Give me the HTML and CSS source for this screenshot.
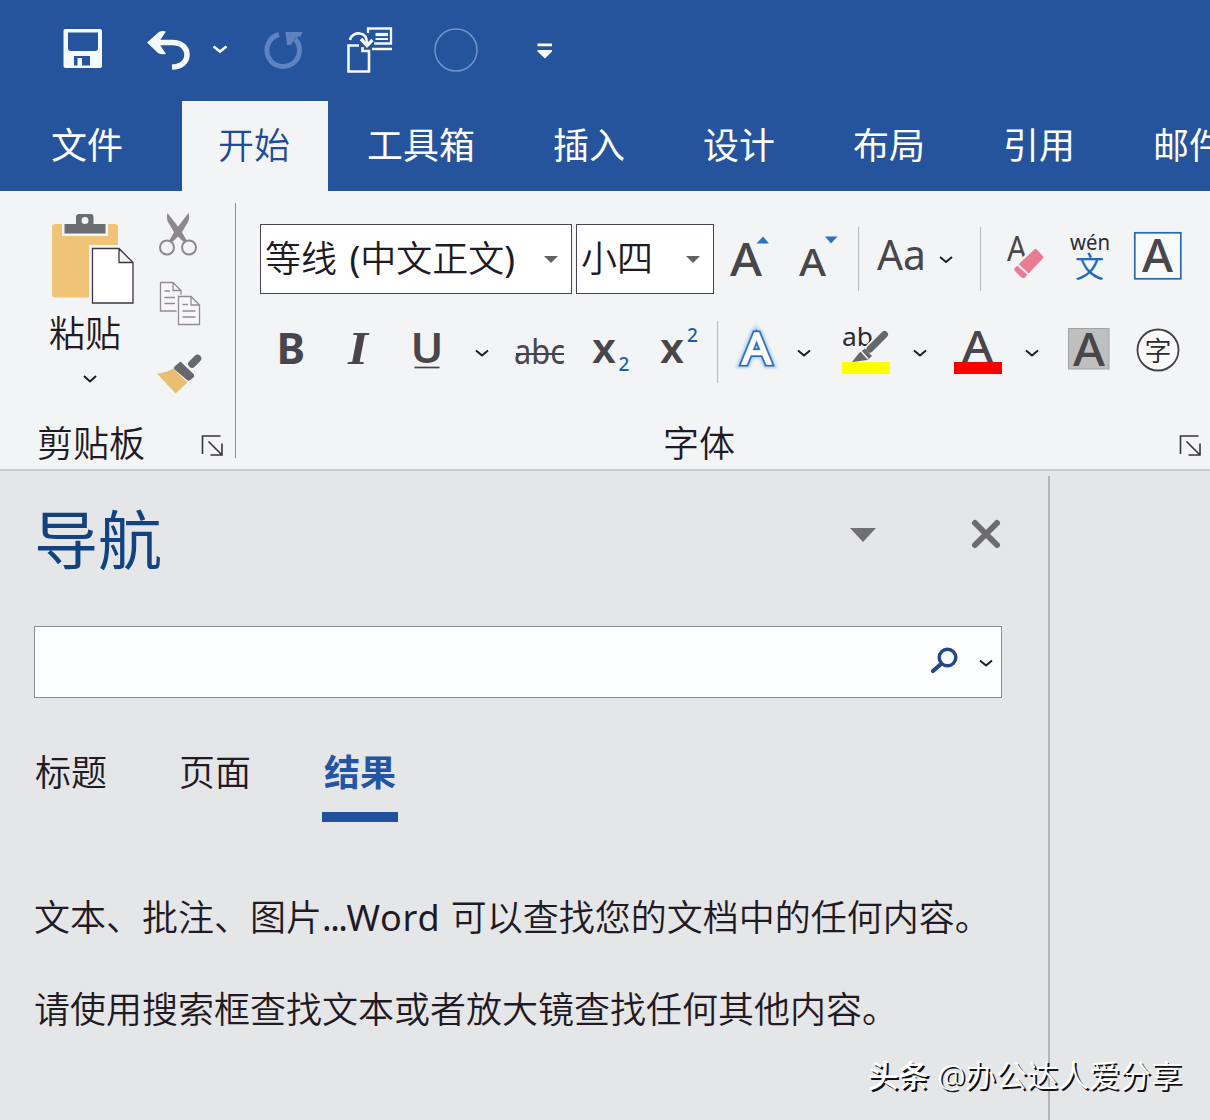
FILE: index.html
```html
<!DOCTYPE html>
<html lang="zh-CN">
<head>
  <meta charset="UTF-8" />
  <title>Word</title>
  <link rel="stylesheet" href="styles.css">
</head>
<body>
  <!-- quick access toolbar -->
  <div class="quick-bar">
    <svg class="icon" width="80" height="60" viewBox="60 20 80 60">
      <path fill="#f4f8ff" fill-rule="evenodd" d="M65 29H100Q102 29 102 31V66Q102 68 100 68H65.500Q63.500 68 63.500 66V31Q63.500 29 65 29ZM68 32.500V48Q68 51 71 51H95Q98 51 98 48V32.500ZM74 56V65.500H77.500V58H82V65.500H90V56Z"/>
    </svg>
    <svg class="icon" width="60" height="60" viewBox="140 20 60 60">
      <path fill="none" stroke="#f4f8ff" stroke-width="5.500" d="M153 42.500H172C182 42.500 187 48 187 54.500C187 62 181 67 172 67"/>
      <path fill="#f4f8ff" d="M147 42.500L159 32Q162 30.500 166 31.500L158.500 42.500L166 54Q161 55 158 53Z"/>
    </svg>
    <svg class="icon" width="50" height="60" viewBox="200 20 50 60">
      <path fill="none" stroke="#f4f8ff" stroke-width="2.600" d="M213.500 46.500L220 51.500L226.500 46.500"/>
    </svg>
    <svg class="icon" width="70" height="60" viewBox="250 20 70 60">
      <path fill="none" stroke="#5f82c1" stroke-width="5" d="M279 34.500A16.300 16.300 0 1 0 295 39"/>
      <path fill="#5f82c1" d="M285.500 32H302.500L300.500 36.500L295.500 37.500L291 45H287Z"/>
    </svg>
    <svg class="icon" width="90" height="60" viewBox="320 20 90 60">
      <g fill="none" stroke="#f4f8ff" stroke-width="2.600">
        <path d="M359 45.500H348.500V71.500H369V51H362.500V47"/>
        <path d="M350 40C351 35 356 33 360 33.500C365 34 367 38 367 44"/>
        <path stroke-width="3.400" d="M361 39L367 45.500L372.500 40"/>
        <path stroke-width="2.300" d="M368 33V28.500H391V43.500H374M372 49H392"/>
        <path stroke-width="3.200" d="M375.500 34.500H388"/>
        <path stroke-width="2" d="M375.500 39H388"/>
      </g>
    </svg>
    <svg class="icon" width="90" height="60" viewBox="410 20 90 60">
      <circle cx="456" cy="50" r="21" fill="none" stroke="#7093cd" stroke-width="1.500"/>
    </svg>
    <svg class="icon" width="90" height="60" viewBox="500 20 90 60">
      <path fill="#fff" d="M537.500 43.500H552V46.200H537.500ZM537.500 50H552V51.500L545 58.500L537.500 51.500Z"/>
    </svg>
  </div>

  <div class="tabs">
    <div class="tab tab-file">文件</div>
    <div class="tab tab-active">开始</div>
    <div class="tab">工具箱</div>
    <div class="tab">插入</div>
    <div class="tab">设计</div>
    <div class="tab">布局</div>
    <div class="tab">引用</div>
    <div class="tab">邮件</div>
  </div>

  <div class="ribbon">
    <div class="clipboard">
      <div class="clipboard-tools">
        <div class="paste">
          <svg class="icon" width="90" height="98" viewBox="48 210 90 98">
            <rect x="52" y="224" width="66" height="73.500" rx="3" fill="#efc477"/>
            <path fill="#f3f4f6" d="M62 221H108V236H62ZM89 245H137V308H89Z"/>
            <path fill="#6b6d70" fill-rule="evenodd" d="M64.500 224H76V217Q76 214 79 214H90.500Q93.500 214 93.500 217V224H105.500V233.500H64.500ZM81.500 220.500A3.500 3.500 0 1 0 88.500 220.500A3.500 3.500 0 1 0 81.500 220.500Z"/>
            <path fill="#fff" stroke="#3d3643" stroke-width="1.300" d="M92.500 248.500H119L133 262.500V303H92.500ZM119 248.500V262.500H133"/>
          </svg>
          <div class="paste-label">粘贴</div>
          <svg class="icon" width="90" height="30" viewBox="48 364 90 30">
            <path class="chevron" d="M84 376L90 381.500L96 376"/>
          </svg>
        </div>
        <div class="edit-tools">
          <svg class="icon" width="54" height="62" viewBox="153 204 54 62">
            <path fill="#8d888d" d="M167.500 213L181 230.500L187 241L183 241.500L174.500 233L168 222Q166 217 167.500 213Z"/>
            <path fill="#8d888d" d="M188.500 213L175 230.500L169 241L173 241.500L181.500 233L188 222Q190 217 188.500 213Z"/>
            <circle cx="167" cy="247.500" r="7" fill="none" stroke="#8d888d" stroke-width="2"/>
            <circle cx="189" cy="247.500" r="7" fill="none" stroke="#8d888d" stroke-width="2"/>
          </svg>
          <svg class="icon" width="54" height="74" viewBox="153 266 54 74">
            <g fill="#f7f7f9" stroke="#918b94" stroke-width="1.300">
              <path d="M160.500 282.500H173L181 290.500V311H160.500ZM173 282.500V290.500H181"/>
              <path d="M164.500 291H170M164.500 297.500H175M164.500 303.500H175"/>
              <path stroke="#f3f4f6" stroke-width="4" d="M178.500 296.500H191L199.500 305V324.500H178.500Z"/>
              <path d="M178.500 296.500H191L199.500 305V324.500H178.500ZM191 296.500V305H199.500M182.500 304.500H188M182.500 311H195.500M182.500 317H195.500"/>
            </g>
          </svg>
          <svg class="icon" width="54" height="60" viewBox="153 340 54 60">
            <path fill="#e9be73" d="M157 373.500Q166 373 173 368.500L187.500 382.500L175.500 393.500Z"/>
            <path fill="#66686b" d="M174 367L180.500 361.500L194 374.500V377L189.500 380.500Q188 381 187 380L174 369Z"/>
            <path stroke="#66686b" stroke-width="7.500" stroke-linecap="round" d="M192 364L197.500 358.500"/>
          </svg>
        </div>
      </div>
      <div class="group-footer">
        <span class="clipboard-name">剪贴板</span>
        <svg class="icon" width="28" height="28" viewBox="198 433 28 28">
          <path class="launcher" d="M202.500 455V437H220.500M208.500 442.500L222 456M222 444.500V456H210.500"/>
        </svg>
      </div>
    </div>

    <div class="font-group">
      <div class="font-row">
        <div class="select font-name">
          <span>等线 <span class="latin">(</span>中文正文<span class="latin">)</span></span>
          <svg class="icon" width="20" height="20" viewBox="0 0 20 20"><path fill="#626166" d="M3 7H17L10 14Z"/></svg>
        </div>
        <div class="select font-size">
          <span>小四</span>
          <svg class="icon" width="20" height="20" viewBox="0 0 20 20"><path fill="#626166" d="M3 7H17L10 14Z"/></svg>
        </div>
        <svg class="icon" width="67" height="70" viewBox="714 224 67 70">
          <text class="letter" x="730" y="275.500" font-size="46" textLength="32" lengthAdjust="spacingAndGlyphs">A</text>
          <path fill="#2a73bd" d="M756.500 243.500L763 236.500L769 243.500Z"/>
        </svg>
        <svg class="icon" width="77" height="70" viewBox="781 224 77 70">
          <text class="letter" x="799" y="275.500" font-size="38" textLength="27" lengthAdjust="spacingAndGlyphs">A</text>
          <path fill="#2a73bd" d="M825 236.500H837.500L831 243.500Z"/>
        </svg>
        <svg class="icon" width="122" height="70" viewBox="858 224 122 70">
          <path class="divider" d="M858.500 227V291"/>
          <text class="letter letter-normal" x="877" y="270" font-size="42" textLength="49" lengthAdjust="spacingAndGlyphs">Aa</text>
          <path class="chevron" d="M940 257L946 262L952 257"/>
        </svg>
        <svg class="icon" width="76" height="70" viewBox="980 224 76 70">
          <path class="divider" d="M980.500 227V291"/>
          <text class="letter letter-normal" x="1007" y="260.500" font-size="34" textLength="20" lengthAdjust="spacingAndGlyphs">A</text>
          <path fill="#e77c94" stroke="#f3f4f6" stroke-width="2.500" d="M1013 268L1034 248Q1036 247 1037.500 248.500L1044 255.500Q1045 257 1044 259L1025 279Q1023 280 1020 278L1014 272Q1012.500 270 1013 268Z"/>
          <path stroke="#f3f4f6" stroke-width="1.800" d="M1017 264L1029 275"/>
        </svg>
        <svg class="icon" width="67" height="70" viewBox="1056 224 67 70">
          <text class="pinyin" x="1070" y="249.500" font-size="22" textLength="40" lengthAdjust="spacingAndGlyphs">wén</text>
          <text class="cjk-blue" x="1075" y="278" font-size="29">文</text>
        </svg>
        <svg class="icon" width="70" height="70" viewBox="1123 224 70 70">
          <rect x="1134.800" y="232.800" width="46" height="46" fill="#f8f9fb" stroke="#2668b5" stroke-width="1.700"/>
          <text class="letter" x="1142" y="271.500" font-size="46" textLength="31" lengthAdjust="spacingAndGlyphs">A</text>
        </svg>
      </div>

      <div class="font-row">
        <svg class="icon" width="65" height="70" viewBox="260 316 65 70">
          <text class="letter letter-bold" x="276.500" y="363.500" font-size="43">B</text>
        </svg>
        <svg class="icon" width="65" height="70" viewBox="325 316 65 70">
          <text class="letter-italic" x="348" y="363.500" font-size="46" textLength="20" lengthAdjust="spacingAndGlyphs">I</text>
        </svg>
        <svg class="icon" width="112" height="70" viewBox="390 316 112 70">
          <text class="letter letter-semi" x="410.500" y="362.500" font-size="42" textLength="33" lengthAdjust="spacingAndGlyphs">U</text>
          <path stroke="#454348" stroke-width="1.700" d="M414.500 367.500H439.500"/>
          <path class="chevron" d="M476 350.500L482 355.500L488 350.500"/>
        </svg>
        <svg class="icon" width="78" height="70" viewBox="502 316 78 70">
          <text class="letter letter-normal" x="514" y="363.500" font-size="34" textLength="51" lengthAdjust="spacingAndGlyphs">abc</text>
          <path stroke="#454348" stroke-width="1.800" d="M516 354H564"/>
        </svg>
        <svg class="icon" width="65" height="70" viewBox="580 316 65 70">
          <text class="letter letter-semi" x="592" y="363" font-size="41" textLength="24" lengthAdjust="spacingAndGlyphs">x</text>
          <text class="digit" x="618.500" y="371" font-size="19">2</text>
        </svg>
        <svg class="icon" width="72" height="70" viewBox="645 316 72 70">
          <text class="letter letter-semi" x="660" y="363" font-size="41" textLength="24" lengthAdjust="spacingAndGlyphs">x</text>
          <text class="digit" x="687" y="342" font-size="19">2</text>
        </svg>
        <svg class="icon" width="113" height="70" viewBox="717 316 113 70">
          <path class="divider" d="M717.500 321V383"/>
          <text class="effect-glow" x="742" y="364" font-size="44" textLength="29" lengthAdjust="spacingAndGlyphs">A</text>
          <text class="effect-line" x="742" y="364" font-size="44" textLength="29" lengthAdjust="spacingAndGlyphs">A</text>
          <text class="effect-fill" x="742" y="364" font-size="44" textLength="29" lengthAdjust="spacingAndGlyphs">A</text>
          <path class="chevron" d="M798 350.500L804 355.500L810 350.500"/>
        </svg>
        <svg class="icon" width="112" height="70" viewBox="830 316 112 70">
          <text class="pinyin" x="842" y="346" font-size="25" textLength="31" lengthAdjust="spacingAndGlyphs">ab</text>
          <path stroke="#f3f4f6" stroke-width="10" stroke-linecap="round" d="M868 351L885 333"/>
          <path stroke="#66686b" stroke-width="7" stroke-linecap="round" d="M870 349L884.500 334.500"/>
          <path fill="#66686b" d="M865 348.500L872 356L867.500 360L852 362L859 353Z"/>
          <path stroke="#f3f4f6" stroke-width="1.500" d="M861 351L868 359"/>
          <path fill="#ffff00" d="M842 362H890V374H842Z"/>
          <path class="chevron" d="M914 350.500L920 355.500L926 350.500"/>
        </svg>
        <svg class="icon" width="110" height="70" viewBox="942 316 110 70">
          <text class="letter" x="962" y="362" font-size="44" textLength="31" lengthAdjust="spacingAndGlyphs">A</text>
          <path fill="#f80000" d="M954 362H1002V374H954Z"/>
          <path class="chevron" d="M1026 350.500L1032 355.500L1038 350.500"/>
        </svg>
        <svg class="icon" width="71" height="70" viewBox="1052 316 71 70">
          <rect x="1068.500" y="328.500" width="40.500" height="40.500" fill="#bfbfbf" stroke="#a2a2a4"/>
          <text class="letter" x="1073" y="365.500" font-size="46" textLength="32" lengthAdjust="spacingAndGlyphs">A</text>
        </svg>
        <svg class="icon" width="70" height="70" viewBox="1123 316 70 70">
          <circle cx="1158" cy="350" r="20.500" fill="#fbfbfc" stroke="#444147" stroke-width="1.800"/>
          <text class="circle-char" x="1144.500" y="361" font-size="27">字</text>
        </svg>
      </div>

      <div class="group-footer">
        <span class="font-group-name">字体</span>
        <svg class="icon" width="28" height="28" viewBox="198 433 28 28">
          <path class="launcher" d="M202.500 455V437H220.500M208.500 442.500L222 456M222 444.500V456H210.500"/>
        </svg>
      </div>
    </div>
  </div>

  <div class="workspace">
    <div class="nav-pane">
      <div class="nav-header">
        <h1 class="nav-title">导航</h1>
        <svg class="icon" width="180" height="40" viewBox="840 514 180 40">
          <path fill="#707072" d="M850 528H876L863 542Z"/>
          <path stroke="#6c6c6f" stroke-width="6" stroke-linecap="round" d="M975 523L997 545M997 523L975 545"/>
        </svg>
      </div>

      <div class="search">
        <svg class="icon" width="80" height="50" viewBox="920 637 80 50">
          <circle cx="946.500" cy="657.500" r="8.300" fill="none" stroke="#234789" stroke-width="3.500"/>
          <path stroke="#234789" stroke-width="4.200" stroke-linecap="round" d="M940 664L932 671"/>
          <path class="chevron" d="M979 660.500L985 665.500L991 660.500"/>
        </svg>
      </div>

      <div class="nav-tabs">
        <div class="nav-tab">标题</div>
        <div class="nav-tab">页面</div>
        <div class="nav-tab nav-tab-active">结果</div>
      </div>

      <p class="hint">文本、批注、图片<span class="latin dots">...</span><span class="latin word">Word </span>可以查找您的文档中的任何内容。</p>
      <p class="hint">请使用搜索框查找文本或者放大镜查找任何其他内容。</p>
    </div>
  </div>

  <div class="watermark"><b>头条</b> @办公达人爱分享</div>
</body>
</html>
```
FILE: styles.css
```css
* {
  box-sizing: border-box;
}
body {
  margin: 0;
  width: 1210px;
  height: 1120px;
  overflow: hidden;
  position: relative;
  display: flex;
  flex-direction: column;
  font-family: "Noto Sans", "Noto Sans CJK SC", sans-serif;
  font-size: 36px;
  font-weight: 350;
  line-height: 50px;
  color: #1f1a24;
  background: #e5e6e8;
}
.icon {
  display: block;
  flex: none;
}
.latin {
  font-weight: 400;
}

/* title area */
.quick-bar {
  height: 101px;
  flex: none;
  display: flex;
  padding: 20px 0 0 60px;
  background: #25549d;
}
.tabs {
  height: 90px;
  flex: none;
  display: flex;
  overflow: hidden;
  background: #25549d;
}
.tab {
  flex: none;
  padding: 20px 39px 0;
  color: #fff;
  font-weight: 400;
  white-space: nowrap;
}
.tab-file {
  width: 182px;
  padding-left: 51px;
}
.tab-active {
  width: 146px;
  padding-left: 36px;
  padding-right: 0;
  color: #1d4c98;
  font-weight: 350;
  background: #f3f4f6;
}

/* ribbon */
.ribbon {
  height: 280px;
  flex: none;
  display: flex;
  background: #f3f4f6;
  border-bottom: 2px solid #c9cbce;
}
.clipboard {
  width: 236px;
  height: 255px;
  margin-top: 12px;
  border-right: 1px solid #8f8e94;
}
.clipboard-tools {
  display: flex;
  height: 222px;
}
.paste {
  width: 153px;
  padding: 7px 0 0 48px;
}
.paste-label {
  padding: 1px 0 5px 1px;
}
.edit-tools {
  padding-top: 1px;
}
.group-footer {
  display: flex;
  align-items: center;
}
.clipboard .group-footer {
  height: 42px;
  padding-left: 37px;
}
.clipboard-name {
  width: 161px;
}
.clipboard-name,
.font-group-name {
  margin-top: -5px;
}
.font-group {
  flex: 1;
  padding: 33px 0 0 24px;
}
.font-row {
  display: flex;
  height: 92px;
}
.select {
  height: 70px;
  display: flex;
  align-items: center;
  justify-content: space-between;
  padding: 0 10px 0 4px;
  border: 1px solid #4a4351;
  background: #fff;
  white-space: nowrap;
}
.font-name {
  width: 312px;
  margin-right: 4px;
  word-spacing: 3px;
}
.font-size {
  width: 138px;
}
.font-group .group-footer {
  height: 42px;
  margin-top: 17px;
  padding-left: 403px;
}
.font-group-name {
  width: 513px;
}

/* strokes and letters inside the icons */
.chevron {
  fill: none;
  stroke: #1f1a24;
  stroke-width: 2;
}
.launcher {
  fill: none;
  stroke: #39323f;
  stroke-width: 1.6;
}
.divider {
  stroke: #b9babd;
  stroke-width: 1.2;
}
.letter {
  fill: #48464a;
  font-weight: 500;
}
.letter-normal {
  font-weight: 400;
}
.letter-semi {
  font-weight: 600;
}
.letter-bold {
  font-weight: 700;
}
.letter-italic {
  fill: #48464a;
  font-family: "Liberation Serif", serif;
  font-style: italic;
  font-weight: 700;
}
.pinyin {
  fill: #2d2932;
  font-weight: 400;
}
.digit {
  fill: #1f5da6;
  font-weight: 500;
}
.cjk-blue {
  fill: #2269bc;
  font-weight: 400;
}
.circle-char {
  fill: #2d2932;
}
.effect-glow,
.effect-line,
.effect-fill {
  font-weight: 400;
}
.effect-glow {
  fill: none;
  stroke: #a9d0fb;
  stroke-width: 8;
  filter: blur(1.5px);
}
.effect-line {
  fill: #2e6cb5;
  stroke: #2e6cb5;
  stroke-width: 5;
}
.effect-fill {
  fill: #fff;
  stroke: #fff;
  stroke-width: 1.5;
}

/* navigation pane */
.workspace {
  flex: 1;
  display: flex;
  padding-top: 5px;
}
.nav-pane {
  width: 1050px;
  padding: 24px 0 0 34px;
  border-right: 2px solid #b4b4b9;
}
.nav-header {
  height: 126px;
  display: flex;
  justify-content: space-between;
  padding-right: 28px;
}
.nav-header .icon {
  margin-top: 14px;
}
.nav-title {
  margin: 0;
  color: #12427f;
  font-size: 64px;
  font-weight: 400;
  line-height: 80px;
}
.search {
  width: 968px;
  height: 72px;
  display: flex;
  align-items: center;
  justify-content: flex-end;
  border: 1px solid #8a8c91;
  background: #fdfeff;
}
.nav-tabs {
  display: flex;
  gap: 68px;
  padding-top: 49px;
}
.nav-tab {
  width: 76px;
  height: 75px;
  padding: 1px 0 0 1px;
}
.nav-tab-active {
  padding-left: 2px;
  color: #2355a3;
  font-weight: 700;
  border-bottom: 10px solid #22529e;
}
.hint {
  margin: 71px 0 0;
  white-space: nowrap;
}
.hint + .hint {
  margin-top: 42px;
}
.dots {
  letter-spacing: -1.5px;
}
.word {
  letter-spacing: 0.8px;
}

.watermark {
  position: absolute;
  right: 28px;
  top: 1055px;
  color: #fff;
  font-size: 31px;
  font-weight: 350;
  line-height: 40px;
  text-shadow: 2px 2px 0 #111;
}
.watermark b {
  font-weight: 500;
}
```
